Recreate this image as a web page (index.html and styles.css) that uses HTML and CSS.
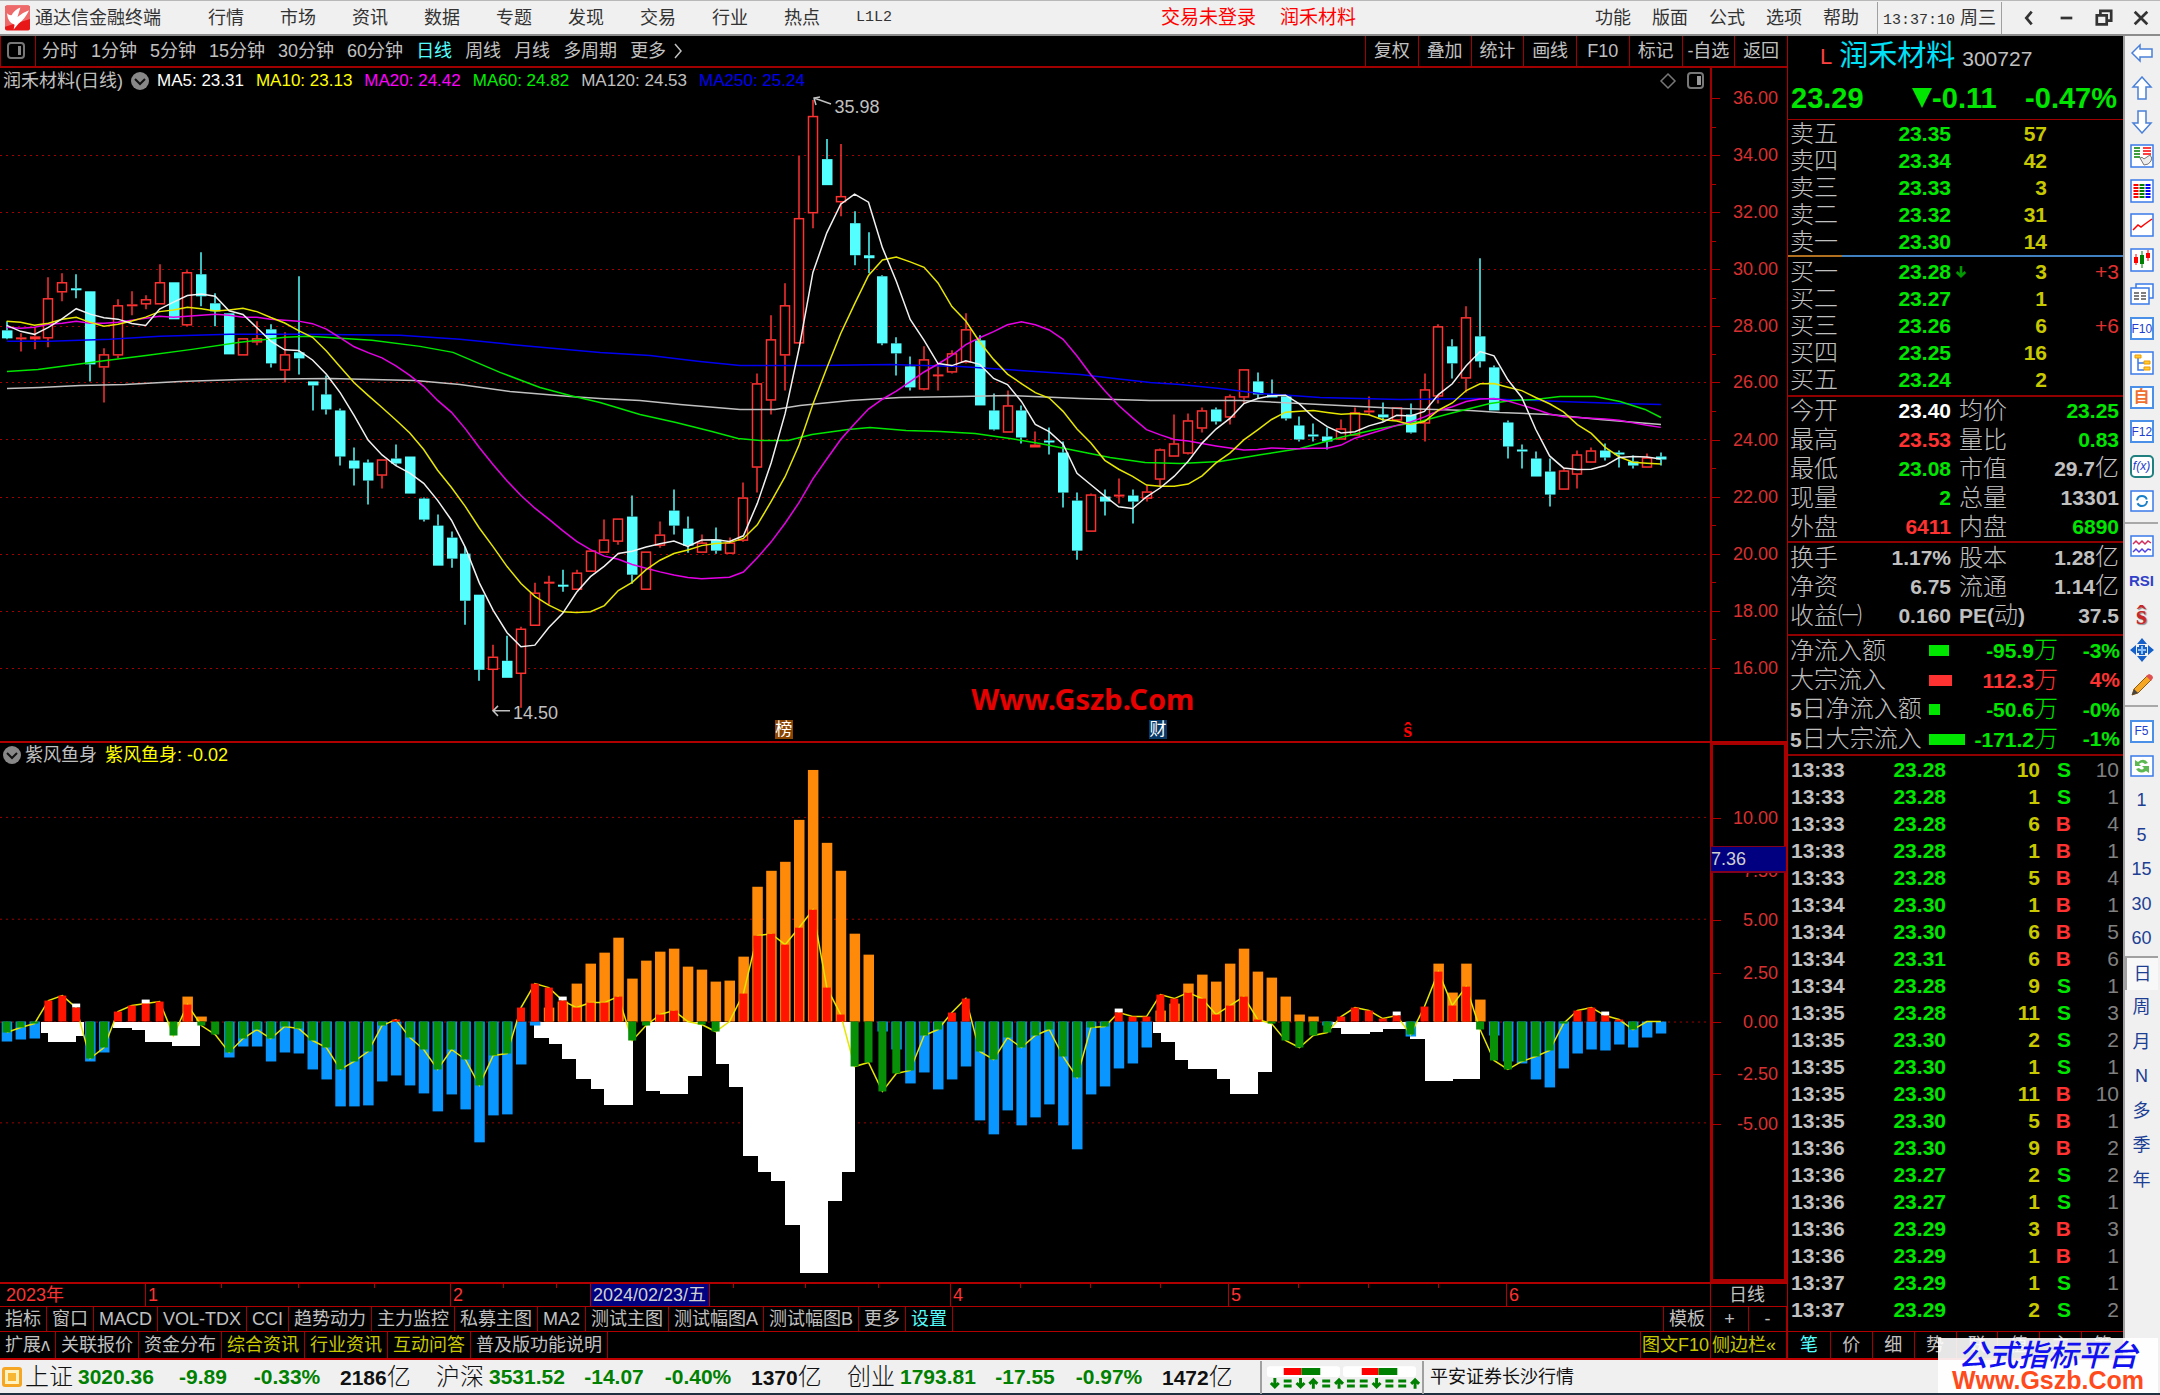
FILE: index.html
```html
<!DOCTYPE html>
<html lang="zh-CN">
<head>
    <meta charset="UTF-8">
    <meta name="viewport" content="width=device-width, initial-scale=1.0">
    <title>通达信金融终端</title>
    <link rel="stylesheet" href="styles.css">
</head>
<body>
    <header class="titlebar">
        <svg class="logo" viewBox="0 0 26 26"><rect width="26" height="26" rx="2" fill="#e81818"/><path d="M0 2Q0 0 2 0H24Q26 0 26 2V14L0 22Z" fill="#ee6a6a"/><path d="M2 8Q5 11 7 10Q10 4 16 2L13 12Q19 7 25 5Q21 14 14 19L9 25L10 20Q3 18 2 8Z" fill="#fff"/></svg>
        <span class="app-name">通达信金融终端</span>
        <nav class="menu">
            <a href="#">行情</a><a href="#">市场</a><a href="#">资讯</a><a href="#">数据</a><a href="#">专题</a><a href="#">发现</a><a href="#">交易</a><a href="#">行业</a><a href="#">热点</a><a href="#" class="mono">L1L2</a>
        </nav>
        <div class="login"><a href="#">交易未登录</a><a href="#">润禾材料</a></div>
        <nav class="menu-right"><a href="#">功能</a><a href="#">版面</a><a href="#">公式</a><a href="#">选项</a><a href="#">帮助</a></nav>
        <div class="clock"><span class="mono">13:37:10</span> 周三</div>
        <div class="win-buttons">
            <button aria-label="后退"><svg viewBox="0 0 20 20"><path d="M13 3L7 10L13 17" fill="none" stroke="#333" stroke-width="3"/></svg></button>
            <button aria-label="最小化"><svg viewBox="0 0 20 20"><path d="M4 10H17" stroke="#333" stroke-width="3"/></svg></button>
            <button aria-label="还原"><svg viewBox="0 0 20 20"><path d="M6 6V2H18V13H14M2 7H13V17H2Z" fill="none" stroke="#333" stroke-width="3"/></svg></button>
            <button aria-label="关闭"><svg viewBox="0 0 20 20"><path d="M3 3L17 17M17 3L3 17" stroke="#333" stroke-width="3"/></svg></button>
        </div>
    </header>

    <div class="workspace">
        <main class="main">
            <div class="toolbar">
                <button class="layout-btn" aria-label="布局"><svg viewBox="0 0 18 18"><rect x="1" y="1" width="16" height="15" rx="3" fill="none" stroke="#777" stroke-width="2"/><path d="M11 4V13H14V4Z" fill="#888"/></svg></button>
                <div class="periods">
                    <button>分时</button><button>1分钟</button><button>5分钟</button><button>15分钟</button><button>30分钟</button><button>60分钟</button><button class="active">日线</button><button>周线</button><button>月线</button><button>多周期</button><button>更多<svg class="more-arrow" viewBox="0 0 12 16"><path d="M3 1L9 8L3 15" fill="none" stroke="#c0c0c0" stroke-width="1.5"/></svg></button>
                </div>
                <div class="tools">
                    <button>复权</button><button>叠加</button><button>统计</button><button>画线</button><button>F10</button><button>标记</button><button>-自选</button><button>返回</button>
                </div>
            </div>

            <section class="pane pane-price">
                <div class="canvas">
                    <svg class="plot" id="pricePlot" viewBox="0 68 1710 672" preserveAspectRatio="none"></svg>
                    <div class="legend">
                        <span class="legend-title">润禾材料(日线)</span>
                        <svg class="fold" viewBox="0 0 18 18"><circle cx="9" cy="9" r="9" fill="#888"/><path d="M4 7L9 12L14 7" fill="none" stroke="#111" stroke-width="2"/></svg>
                        <span class="ma5">MA5: 23.31</span><span class="ma10">MA10: 23.13</span><span class="ma20">MA20: 24.42</span><span class="ma60">MA60: 24.82</span><span class="ma120">MA120: 24.53</span><span class="ma250">MA250: 25.24</span>
                        <svg class="corner" viewBox="0 0 46 18"><path d="M9 2L16 9L9 16L2 9Z" fill="none" stroke="#777" stroke-width="1.5"/><rect x="29" y="1" width="15" height="15" rx="3" fill="none" stroke="#777" stroke-width="2"/><path d="M38 4V13H42V4Z" fill="#999"/></svg>
                    </div>
                    <span class="mark mark-high">35.98</span>
                    <span class="mark mark-low">14.50</span>
                    <span class="site">Www.Gszb.Com</span>
                    <span class="event event-list">榜</span>
                    <span class="event event-fin">财</span>
                    <span class="event event-s">ŝ</span>
                </div>
                <div class="axis" id="priceAxis"></div>
            </section>

            <section class="pane pane-sub">
                <div class="canvas">
                    <svg class="plot" id="subPlot" viewBox="0 742 1710 540" preserveAspectRatio="none"></svg>
                    <div class="legend">
                        <svg class="fold" viewBox="0 0 18 18"><circle cx="9" cy="9" r="9" fill="#888"/><path d="M4 7L9 12L14 7" fill="none" stroke="#111" stroke-width="2"/></svg>
                        <span class="legend-title">紫风鱼身</span><span class="sub-value">紫风鱼身: -0.02</span>
                    </div>
                </div>
                <div class="axis axis-sub" id="subAxis"><span class="cursor-value">7.36</span></div>
            </section>

            <div class="dates">
                <div class="date-track" id="dateTrack"></div>
                <div class="date-period">日线</div>
            </div>

            <div class="tabs">
                <button>指标</button><button>窗口</button><button>MACD</button><button>VOL-TDX</button><button>CCI</button><button>趋势动力</button><button>主力监控</button><button>私募主图</button><button>MA2</button><button>测试主图</button><button>测试幅图A</button><button>测试幅图B</button><button>更多</button><button class="active">设置</button>
                <div class="tabs-right"><button>模板</button><button class="zoom-btn">+</button><button class="zoom-btn">-</button></div>
            </div>
            <div class="tabs tabs-info">
                <button>扩展ʌ</button><button>关联报价</button><button>资金分布</button><button class="hot">综合资讯</button><button class="hot">行业资讯</button><button class="hot">互动问答</button><button>普及版功能说明</button>
                <div class="tabs-right"><button class="hot">图文F10</button><button class="hot side-toggle">侧边栏«</button></div>
            </div>
        </main>

        <aside class="panel">
            <div class="stock">
                <div class="stock-name"><span class="flag">L</span><h1>润禾材料</h1><span class="code">300727</span></div>
                <div class="stock-price"><span>23.29</span><span class="change"><svg viewBox="0 0 20 20"><path d="M0 0H20L10 20Z" fill="#00e600"/></svg>-0.11</span><span>-0.47%</span></div>
            </div>
            <table class="book sell">
                <tr><th>卖五</th><td>23.35</td><td></td><td>57</td><td></td></tr>
                <tr><th>卖四</th><td>23.34</td><td></td><td>42</td><td></td></tr>
                <tr><th>卖三</th><td>23.33</td><td></td><td>3</td><td></td></tr>
                <tr><th>卖二</th><td>23.32</td><td></td><td>31</td><td></td></tr>
                <tr><th>卖一</th><td>23.30</td><td></td><td>14</td><td></td></tr>
            </table>
            <div class="ratio"></div>
            <table class="book buy">
                <tr><th>买一</th><td>23.28</td><td><svg viewBox="0 0 14 14"><path d="M7 0V12M2 7L7 12L12 7" fill="none" stroke="#009a00" stroke-width="3"/></svg></td><td>3</td><td>+3</td></tr>
                <tr><th>买二</th><td>23.27</td><td></td><td>1</td><td></td></tr>
                <tr><th>买三</th><td>23.26</td><td></td><td>6</td><td>+6</td></tr>
                <tr><th>买四</th><td>23.25</td><td></td><td>16</td><td></td></tr>
                <tr><th>买五</th><td>23.24</td><td></td><td>2</td><td></td></tr>
            </table>
            <table class="stats">
                <tr><th>今开</th><td class="white">23.40</td><th>均价</th><td class="down">23.25</td></tr>
                <tr><th>最高</th><td class="up">23.53</td><th>量比</th><td class="down">0.83</td></tr>
                <tr><th>最低</th><td class="down">23.08</td><th>市值</th><td>29.7<i>亿</i></td></tr>
                <tr><th>现量</th><td class="down">2</td><th>总量</th><td>13301</td></tr>
                <tr><th>外盘</th><td class="up">6411</td><th>内盘</th><td class="down">6890</td></tr>
            </table>
            <table class="stats stats-more">
                <tr><th>换手</th><td>1.17%</td><th>股本</th><td>1.28<i>亿</i></td></tr>
                <tr><th>净资</th><td>6.75</td><th>流通</th><td>1.14<i>亿</i></td></tr>
                <tr><th>收益㈠</th><td>0.160</td><th><b>PE(</b>动<b>)</b></th><td>37.5</td></tr>
            </table>
            <table class="flow">
                <tr class="down"><th>净流入额</th><td><div class="bar" style="width: 20px"></div></td><td>-95.9<i>万</i></td><td>-3%</td></tr>
                <tr class="up"><th>大宗流入</th><td><div class="bar" style="width: 23px"></div></td><td>112.3<i>万</i></td><td>4%</td></tr>
                <tr class="down"><th><b>5</b>日净流入额</th><td><div class="bar" style="width: 11px"></div></td><td>-50.6<i>万</i></td><td>-0%</td></tr>
                <tr class="down"><th><b>5</b>日大宗流入</th><td><div class="bar" style="width: 36px"></div></td><td>-171.2<i>万</i></td><td>-1%</td></tr>
            </table>
            <div class="ticks"><table><tbody id="ticks"></tbody></table></div>
            <div class="panel-tabs">
                <button class="active">笔</button><button>价</button><button>细</button><button>势</button><button>联</button><button>值</button><button>主</button><button>筹</button>
            </div>
        </aside>

        <aside class="sidebar">
            <div class="side-group side-nav">
                <button aria-label="返回"><svg viewBox="0 0 24 24"><path d="M2 12L10 4V8H22V16H10V20Z" fill="#fff" stroke="#4a80d8" stroke-width="1.5"/></svg></button>
                <button aria-label="上翻"><svg viewBox="0 0 24 24"><path d="M12 1L21 11H16V23H8V11H3Z" fill="#fff" stroke="#4a80d8" stroke-width="1.5"/></svg></button>
                <button aria-label="下翻"><svg viewBox="0 0 24 24"><path d="M12 23L21 13H16V1H8V13H3Z" fill="#fff" stroke="#4a80d8" stroke-width="1.5"/></svg></button>
                <button aria-label="自选报价"><svg viewBox="0 0 24 24"><rect x="1" y="1" width="22" height="22" fill="#fff" stroke="#3a7ae8" stroke-width="1.5"/><path d="M4 4H10M4 7H10M4 10H10M4 13H10" stroke="#008000" stroke-width="1.5"/><path d="M13 4H21M13 7H21M13 10H21" stroke="#f00" stroke-width="1.5"/><path d="M10 14Q12 12 14 15L20 11Q23 14 21 17Q19 21 14 21Z" fill="#eee" stroke="#777"/></svg></button>
                <button aria-label="行情列表"><svg viewBox="0 0 24 24"><rect x="1" y="1" width="22" height="22" fill="#fff" stroke="#3a7ae8" stroke-width="1.5"/><g stroke-width="5" stroke-dasharray="2 1"><path d="M6 5V20" stroke="#f00"/><path d="M12 5V20" stroke="#008000"/><path d="M18 5V20" stroke="#00f"/></g></svg></button>
                <button aria-label="分时图"><svg viewBox="0 0 24 24"><rect x="1" y="1" width="22" height="22" fill="#fff" stroke="#3a7ae8" stroke-width="1.5"/><path d="M3 17L8 12L11 14L15 11L22 6" fill="none" stroke="#f00" stroke-width="1.5"/></svg></button>
                <button aria-label="K线图"><svg viewBox="0 0 24 24"><rect x="1" y="1" width="22" height="22" fill="#fff" stroke="#3a7ae8" stroke-width="1.5"/><path d="M6 6V17M18 2V13" stroke="#f00"/><path d="M4 9H8V15H4ZM16 5H20V10H16Z" fill="#f00"/><path d="M12 3V20" stroke="#008000"/><path d="M10 7H14V16H10Z" fill="#008000"/></svg></button>
                <button aria-label="资料"><svg viewBox="0 0 24 24"><path d="M6 6V2H23V16H19" fill="#fff" stroke="#3a7ae8" stroke-width="1.5"/><rect x="1" y="6" width="18" height="16" fill="#fff" stroke="#3a7ae8" stroke-width="1.5"/><path d="M4 11H9M4 14H9M4 17H9M11 11H16M11 14H16M11 17H16" stroke="#555" stroke-width="1.5"/></svg></button>
                <button class="boxed">F10</button>
                <button aria-label="板块"><svg viewBox="0 0 24 24"><rect x="1" y="1" width="22" height="22" fill="#fff" stroke="#3a7ae8" stroke-width="1.5"/><path d="M8 7V19H14M8 12H14" fill="none" stroke="#3a7ae8" stroke-width="1.5"/><path d="M5 4H11V7H5ZM14 10H20V13H14ZM14 16H20V19H14Z" fill="#fc3" stroke="#e90"/></svg></button>
                <button class="boxed orange">自</button>
                <button class="boxed">F12</button>
                <button class="boxed round">f(x)</button>
                <button aria-label="刷新"><svg viewBox="0 0 24 24"><rect x="1" y="2" width="22" height="20" fill="#fff" stroke="#3a7ae8" stroke-width="1.5"/><circle cx="12" cy="12" r="5" fill="none" stroke="#1a80c8" stroke-width="2" stroke-dasharray="13 3"/></svg></button>
            </div>
            <div class="side-group side-draw">
                <button aria-label="多图"><svg viewBox="0 0 24 24"><rect x="1" y="2" width="22" height="20" fill="#fff" stroke="#3a7ae8" stroke-width="1.5"/><path d="M3 10L6 7L9 10L12 7L15 10L18 7L21 9" fill="none" stroke="#d03060" stroke-width="1.5"/><path d="M3 18L6 15L9 18L12 15L15 18L18 15L21 16" fill="none" stroke="#5040e0" stroke-width="1.5"/></svg></button>
                <button class="rsi">RSI</button>
                <button class="sign">ŝ</button>
                <button aria-label="移动"><svg viewBox="0 0 24 24"><path d="M12 0L17 6H7ZM12 24L7 18H17ZM0 12L6 7V17ZM24 12L18 17V7ZM9 7H15V9H17V15H15V17H9V15H7V9H9Z" fill="#1560c8"/><path d="M11 8H13V11H16V13H13V16H11V13H8V11H11Z" fill="#8cc0f8"/></svg></button>
                <button aria-label="画线"><svg viewBox="0 0 24 24"><path d="M2 22L4 16L17 3L21 7L8 20Z" fill="#f5a623" stroke="#8a5a10"/><path d="M16 3L19 1Q23 2 23 5L21 8Z" fill="#e05050"/><path d="M2 22L4 16L8 20Z" fill="#444"/></svg></button>
            </div>
            <div class="side-group side-period">
                <button class="boxed">F5</button>
                <button aria-label="切换"><svg viewBox="0 0 24 24"><rect x="1" y="2" width="22" height="20" fill="#fff" stroke="#3a7ae8" stroke-width="1.5"/><path d="M5 12V6L8 8Q14 3 18 9L15 10Q12 7 9 10L11 12ZM19 12V19L16 17Q10 21 6 15L9 14Q12 17 14 14L12 12Z" fill="#5cb850"/></svg></button>
                <button>1</button><button>5</button><button>15</button><button>30</button><button>60</button><button class="pressed">日</button><button>周</button><button>月</button><button>N</button><button>多</button><button>季</button><button>年</button>
            </div>
        </aside>
    </div>

    <footer class="status">
        <svg class="status-icon" viewBox="0 0 22 22"><rect x="1" y="1" width="20" height="20" rx="3" fill="#f5a623"/><rect x="4" y="4" width="14" height="14" fill="#fff3c4"/><rect x="7" y="7" width="8" height="8" fill="#f7b733"/></svg>
        <div class="index"><span>上证</span><b>3020.36</b><b>-9.89</b><b>-0.33%</b><span class="amount">2186<i>亿</i></span></div>
        <div class="index"><span>沪深</span><b>3531.52</b><b>-14.07</b><b>-0.40%</b><span class="amount">1370<i>亿</i></span></div>
        <div class="index"><span>创业</span><b>1793.81</b><b>-17.55</b><b>-0.97%</b><span class="amount">1472<i>亿</i></span></div>
        <svg class="breadth" viewBox="0 0 162 33">
            <rect x="5" y="5" width="74" height="11" rx="3" fill="#fff"/><rect x="82" y="5" width="74" height="11" rx="3" fill="#fff"/>
            <path d="M22 7H40V14H22ZM101 7H118V14H101Z" fill="#f00"/><path d="M40 7H59V14H40ZM118 7H137V14H118Z" fill="#008000"/>
            <g id="arrows" fill="none" stroke="#008000" stroke-width="3"></g>
        </svg>
        <span class="broker">平安证券长沙行情</span>
    </footer>

    <div class="watermark"><span class="wm-name">公式指标平台</span><span class="wm-url">Www.Gszb.Com</span></div>

    <script src="charts.js"></script>
</body>
</html>
```
FILE: styles.css
```css
* {
    box-sizing: border-box;
}

body {
    margin: 0;
    min-height: 100vh;
    display: flex;
    flex-direction: column;
    background: #f0f0f0;
    color: #c0c0c0;
    font-family: "Liberation Sans", "Noto Sans CJK SC", sans-serif;
    font-size: 18px;
    line-height: 24px;
}

button {
    margin: 0;
    padding: 0;
    border: 0;
    background: none;
    color: inherit;
    font: inherit;
    white-space: nowrap;
    cursor: pointer;
}

a {
    color: inherit;
    text-decoration: none;
}

svg {
    display: block;
}

i {
    font-style: normal;
    font-weight: 300;
}

table {
    border-collapse: collapse;
    table-layout: fixed;
    width: 100%;
}

th,
td {
    padding: 0;
    white-space: nowrap;
}

.mono {
    font-family: "Liberation Mono", monospace;
    font-size: 15px;
}

/* title bar */
.titlebar {
    display: flex;
    align-items: center;
    height: 36px;
    padding-left: 5px;
    border-top: 1px solid #b8b8b8;
    border-bottom: 2px solid #8c8c8c;
    color: #333;
    white-space: nowrap;
}

.logo {
    width: 25px;
    height: 26px;
    margin-right: 5px;
}

.menu {
    display: flex;
    gap: 36px;
    margin-left: 47px;
}

.login {
    display: flex;
    gap: 24px;
    margin-left: auto;
    color: #f00;
    font-size: 19px;
}

.menu-right {
    display: flex;
    gap: 21px;
    margin-left: 239px;
}

.clock {
    height: 32px;
    margin-left: 18px;
    padding: 0 5px;
    border: solid #a0a0a0;
    border-width: 0 1px;
    line-height: 32px;
}

.win-buttons {
    display: flex;
    justify-content: space-between;
    width: 158px;
    padding: 0 10px 0 18px;
}

.win-buttons svg {
    width: 18px;
    height: 18px;
}

/* workspace */
.workspace {
    flex: 1;
    display: flex;
}

.main {
    flex: 1;
    display: flex;
    flex-direction: column;
    min-width: 0;
    background: #000;
}

.toolbar {
    display: flex;
    height: 32px;
    border-bottom: 2px solid #a00000;
}

.layout-btn {
    width: 36px;
    padding-left: 6px;
    border: solid #a00000;
    border-width: 0 1px;
}

.layout-btn svg {
    width: 18px;
    height: 18px;
}

.periods {
    display: flex;
    gap: 13px;
    padding-left: 6px;
}

.periods button {
    display: flex;
    align-items: center;
}

.active {
    color: #54ffff;
}

.more-arrow {
    width: 12px;
    height: 16px;
    margin-left: 6px;
}

.tools {
    display: grid;
    grid-template-columns: repeat(8, 1fr);
    width: 422px;
    margin-left: auto;
}

.tools button {
    border-left: 1px solid #a00000;
}

.pane {
    display: flex;
}

.pane-price {
    flex: 674 1 0;
    border-bottom: 2px solid #b00000;
}

.pane-sub {
    flex: 540 1 0;
}

.canvas {
    flex: 1;
    position: relative;
    min-width: 0;
}

.plot {
    position: absolute;
    width: 100%;
    height: 100%;
}

.legend {
    position: relative;
    display: flex;
    align-items: center;
    gap: 12px;
    height: 26px;
    padding: 0 5px 0 3px;
    font-size: 17px;
    white-space: nowrap;
}

.legend-title {
    font-size: 18px;
}

.fold {
    width: 18px;
    height: 18px;
    margin: 0 -4px;
}

.pane-sub .legend {
    height: 24px;
    gap: 8px;
}

.pane-sub .fold {
    margin-left: 0;
}

.corner {
    width: 46px;
    height: 18px;
    margin-left: auto;
}

.ma5 { color: #fff; }
.ma10, .sub-value { color: #ffff00; }
.ma20 { color: #ff00ff; }
.ma60 { color: #00f000; }
.ma120 { color: #c0c0c0; }
.ma250 { color: #0000f0; }

.sub-value {
    font-size: 18px;
}

.mark {
    position: absolute;
    font-size: 18px;
}

.mark-high {
    left: 48.8%;
    top: 4%;
}

.mark-low {
    left: 30%;
    top: 94%;
}

.site {
    position: absolute;
    left: 56.8%;
    top: 91.5%;
    color: #e60000;
    font: bold 29px/30px "Noto Sans", sans-serif;
}

.event {
    position: absolute;
    bottom: 2px;
    width: 18px;
    height: 19px;
    color: #fff;
    font-size: 17px;
    line-height: 19px;
    text-align: center;
}

.event-list {
    left: 45.3%;
    background: #8b4500;
}

.event-fin {
    left: 67.2%;
    background: #083868;
}

.event-s {
    left: 81.8%;
    color: #f00;
    font-family: "Liberation Serif", serif;
    font-weight: bold;
    font-size: 22px;
}

.axis {
    position: relative;
    width: 77px;
    border-left: 2px solid #a00000;
    color: #d83030;
}

.axis-sub {
    border: 3px solid #a80000;
    border-top-width: 2px;
}

.axis-label {
    position: absolute;
    right: 9px;
    height: 24px;
    margin-top: -12px;
}

.axis-sub .axis-label {
    right: 6px;
}

.axis-tick {
    position: absolute;
    left: 0;
    width: 4px;
    height: 1px;
    background: #b00000;
}

.axis-tick.long {
    width: 8px;
}

.cursor-value {
    position: absolute;
    z-index: 1;
    left: -2px;
    right: -2px;
    top: 19%;
    height: 27px;
    border: solid #800020;
    border-width: 1px 0 2px;
    background: #000080;
    color: #d0d0d0;
}

.dates {
    display: flex;
    height: 24px;
    border-top: 2px solid #b00000;
    line-height: 23px;
}

.date-track {
    flex: 1;
    position: relative;
    color: #ff3232;
}

.date-mark {
    position: absolute;
    top: 0;
    height: 22px;
    padding-left: 2px;
    border-left: 1px solid #b00000;
}

.date-mark.first {
    border-left: 0;
}

.date-mark.minor {
    height: 4px;
}

.date-mark.cursor {
    padding-right: 3px;
    border-right: 1px solid #b00000;
    background: #000080;
    color: #d0d0d0;
}

.date-period {
    width: 77px;
    border-left: 1px solid #b00000;
    padding-right: 4px;
    text-align: center;
}

.tabs {
    display: flex;
    height: 25px;
    border-top: 1px solid #b00000;
    line-height: 24px;
}

.tabs-info {
    height: 29px;
    border-bottom: 2px solid #c00000;
    line-height: 26px;
}

.tabs button {
    padding: 0 5px;
    border-right: 1px solid #a00000;
}

.tabs-right {
    display: flex;
    margin-left: auto;
    border-left: 1px solid #a00000;
}

.tabs-right .zoom-btn {
    width: 38px;
}

.tabs .hot {
    color: #c8c800;
}

.tabs-info .tabs-right button {
    padding: 0 1px;
}

.tabs-right .side-toggle {
    width: 76px;
    text-align: left;
}

/* quote panel */
.panel {
    display: flex;
    flex-direction: column;
    width: 336px;
    border-left: 1px solid #b00000;
    background: #000;
    font-size: 24px;
    line-height: 27px;
}

.panel th {
    font-weight: 300;
    text-align: left;
    padding-left: 2px;
}

.panel td,
.panel th b {
    font-size: 21px;
    font-weight: bold;
    text-align: right;
}

.panel td i {
    font-size: 24px;
}

.panel .up { color: #ff3232; }
.panel .down { color: #00e600; }
.panel .white { color: #fff; }

.stock {
    height: 84px;
    border-bottom: 1px solid #a00000;
}

.stock-name {
    display: flex;
    align-items: center;
    height: 40px;
    padding-left: 32px;
}

.stock-name h1 {
    margin: 0 7px;
    color: #00e0f8;
    font-size: 29px;
    font-weight: 400;
}

.flag {
    color: #ff4040;
    font-size: 22px;
}

.code {
    padding-top: 4px;
    font-size: 21px;
}

.stock-price {
    display: flex;
    justify-content: space-between;
    align-items: center;
    height: 44px;
    padding: 0 6px 0 3px;
    color: #00e600;
    font-size: 29px;
    font-weight: bold;
}

.change {
    display: flex;
    align-items: center;
    padding-left: 20px;
}

.change svg {
    width: 20px;
    height: 20px;
}

.book {
    height: 135px;
}

.book tr {
    height: 27px;
}

.book th { width: 60px; }
.book td:nth-child(2) { width: 103px; color: #00e600; }
.book td:nth-child(3) { width: 18px; }
.book td:nth-child(4) { width: 78px; color: #c8c800; }
.book td:nth-child(5) {
    padding-right: 4px;
    color: #e03030;
    font-weight: normal;
}

.book td svg {
    width: 12px;
    height: 14px;
    margin-left: 4px;
}

.ratio {
    height: 2px;
    background: linear-gradient(to right, #b07020 16%, #4080c0 16%);
}

.buy {
    margin: 1px 0 2px;
}

.stats {
    height: 146px;
    border-top: 2px solid #900000;
}

.stats tr,
.flow tr {
    height: 28px;
    line-height: 28px;
}

.stats th { width: 74px; }
.stats td { width: 89px; }
.stats th:nth-child(3) { width: 82px; padding-left: 8px; }
.stats td:nth-child(4) { width: auto; padding-right: 4px; }

.stats-more {
    height: 93px;
    border-bottom: 4px solid #000;
}

.flow {
    height: 120px;
    border-top: 2px solid #900000;
}

.flow th { width: 141px; color: #c0c0c0; }
.flow td { width: 38px; }
.flow td:nth-child(3) { width: 91px; }
.flow td:nth-child(4) { width: auto; padding-right: 3px; }

.bar {
    height: 11px;
    background: currentColor;
}

.ticks {
    flex: 1;
    border-top: 2px solid #900000;
}

.ticks tr {
    height: 27px;
}

.ticks td:nth-child(1) { width: 58px; padding-left: 3px; text-align: left; }
.ticks td:nth-child(2) { width: 100px; color: #00e600; }
.ticks td:nth-child(3) { width: 94px; color: #c8c800; }
.ticks td:nth-child(4) { width: 31px; }
.ticks td:nth-child(5) { padding-right: 4px; color: #808080; font-weight: normal; }

.panel-tabs {
    display: grid;
    grid-template-columns: repeat(8, 1fr);
    height: 29px;
    border-top: 1px solid #b00000;
    border-bottom: 2px solid #c00000;
    font-size: 18px;
}

.panel-tabs button + button {
    border-left: 1px solid #a00000;
}

/* icon sidebar */
.sidebar {
    width: 37px;
    border-left: 2px solid #a0a0a0;
    color: #1c3f94;
}

.side-group {
    display: grid;
    grid-auto-rows: 1fr;
    justify-items: center;
    align-items: center;
    margin-right: 2px;
    border-bottom: 2px solid #a8a8a8;
}

.side-nav {
    height: 488px;
    padding-bottom: 4px;
    margin-bottom: 5px;
}

.side-draw {
    height: 178px;
    padding-bottom: 3px;
    margin-bottom: 7px;
}

.side-period {
    height: 483px;
    border-bottom: 0;
}

.side-group svg {
    width: 24px;
    height: 24px;
}

.side-group .boxed {
    width: 24px;
    height: 23px;
    border: 2px solid #4a90e8;
    background: #fff;
    color: #2040d0;
    font-size: 12px;
    line-height: 18px;
}

.side-group .orange {
    color: #f07030;
    font-size: 16px;
    font-weight: bold;
}

.side-group .round {
    border-color: #208080;
    border-radius: 5px;
    font-style: italic;
}

.side-group .rsi {
    color: #3040c8;
    font-size: 15px;
    font-weight: bold;
}

.side-group .sign {
    color: #c82828;
    font: bold 28px/30px "Liberation Serif", serif;
    text-shadow: 1px 1px 1px #888;
}

.side-group .pressed {
    width: 100%;
    height: 34px;
    border: solid #a0a0a0;
    border-width: 2px 0 0 2px;
    background: #f8f8f8;
}

/* index strip */
.status {
    display: flex;
    align-items: center;
    height: 35px;
    padding: 1px 0 0 1px;
    border-bottom: 2px solid #203040;
    color: #111;
    white-space: nowrap;
}

.status-icon {
    width: 22px;
    height: 22px;
    margin-right: 2px;
}

.index {
    display: grid;
    grid-template-columns: 53px 85px 80px 88px 105px;
    align-items: center;
    font-size: 24px;
    font-weight: 300;
}

.index b {
    color: #008000;
    font-size: 21px;
    font-weight: bold;
    text-align: center;
}

.index b:nth-child(2) {
    text-align: left;
}

.index .amount {
    padding-left: 9px;
    font-size: 21px;
    font-weight: bold;
}

.amount i {
    font-size: 24px;
}

.breadth {
    width: 164px;
    height: 33px;
    margin-left: 2px;
    border: solid #a0a0a0;
    border-width: 0 2px;
}

.broker {
    margin-left: 6px;
}

.watermark {
    position: absolute;
    right: 2px;
    bottom: 2px;
    display: flex;
    flex-direction: column;
    align-items: center;
    width: 220px;
    height: 55px;
    background: rgba(255, 255, 255, 0.9);
    white-space: nowrap;
}

.wm-name {
    color: #1010f0;
    font: italic 500 30px/30px "Noto Sans CJK SC", sans-serif;
}

.wm-url {
    color: #ff4a1c;
    font: bold 25px/25px "Liberation Sans", sans-serif;
}
```
FILE: charts.js
```js
const NS = 'http://www.w3.org/2000/svg';
const STEP = 13.9;
const X0 = 6.7;
const xAt = i => X0 + i * STEP;

function add(parent, tag, attrs) {
    const el = document.createElementNS(NS, tag);
    for (const key in attrs) el.setAttribute(key, attrs[key]);
    parent.appendChild(el);
    return el;
}

// [direction, high, body top, body bottom, low]
const candles = [
    ['c',321,330,338,339],['r',333,337,339,351],['r',327,336,339,349],['r',277,298,338,347],['r',273,282,292,301],
    ['c',274,288,289,298],['c',291,291,364,381],['r',348,354,367,402],['r',299,305,355,358],['r',291,304,306,315],
    ['r',295,299,304,309],['r',264,282,304,304],['c',282,282,319,319],['r',270,272,325,326],['c',252,274,296,306],
    ['c',293,303,311,326],['c',313,313,354,354],['r',338,338,355,355],['r',321,338,342,345],['c',324,329,363,367],
    ['r',332,354,370,382],['c',276,352,358,374],['c',381,381,385,410],['c',375,394,409,414],['c',408,410,456,465],
    ['c',447,460,468,485],['c',459,462,480,504],['r',459,459,475,488],['c',444,458,463,465],['c',456,456,493,493],
    ['c',497,498,519,521],['c',514,525,565,565],['c',531,537,558,567],['c',546,553,600,624],['c',594,594,669,680],
    ['r',644,656,669,710],['c',635,660,677,677],['r',626,628,673,707],['r',582,592,625,625],['r',575,581,583,604],
    ['c',569,584,585,591],['r',569,572,589,589],['r',550,550,571,571],['r',519,539,552,552],['r',518,518,541,544],
    ['c',495,516,574,583],['r',551,551,589,589],['r',521,534,545,547],['c',489,510,525,534],['c',516,528,545,552],
    ['r',534,542,552,552],['c',527,539,550,553],['r',537,542,553,553],['r',482,497,540,541],['r',373,383,467,492],
    ['r',315,339,400,414],['r',283,305,355,390],['r',156,218,343,343],['r',100,116,213,228],['c',139,159,185,185],
    ['r',144,196,202,216],['c',211,223,255,265],['c',232,255,258,273],['c',275,276,343,345],['c',337,343,353,375],
    ['c',356,366,387,390],['r',346,359,389,390],['r',363,374,375,390],['r',350,353,372,373],['r',313,329,362,363],
    ['c',335,340,405,405],['c',393,410,429,430],['r',390,405,432,432],['c',405,410,437,443],['r',431,444,447,447],
    ['c',427,440,441,454],['c',441,452,492,507],['c',492,500,550,559],['r',493,494,531,531],['c',489,496,501,515],
    ['r',478,494,495,503],['c',489,495,501,523],['r',485,491,498,501],['r',448,449,479,486],['r',414,443,456,456],
    ['r',413,420,453,454],['r',407,410,428,432],['c',407,409,421,424],['r',394,396,417,424],['r',369,369,397,403],
    ['c',372,381,394,398],['c',379,394,397,397],['c',396,396,418,420],['c',416,425,439,441],['c',423,434,436,441],
    ['c',427,436,441,449],['r',419,428,439,439],['r',407,412,435,435],['r',396,410,412,414],['c',402,414,417,421],
    ['r',407,407,420,420],['c',403,414,432,433],['r',373,389,423,441],['r',324,326,396,403],['c',339,346,363,378],
    ['r',306,317,378,392],['c',258,336,361,367],['c',365,367,410,410],['c',420,422,446,458],['c',444,449,451,468],
    ['c',451,458,476,476],['c',458,471,494,506],['r',467,470,489,489],['r',450,454,474,488],['r',447,450,462,462],
    ['c',443,450,457,460],['c',450,452,454,467],['c',455,461,465,468],['r',453,457,467,467],['c',452,456,459,465]
];

// averages before the first full window
const seed = {
    5: [325,331,334,327],
    10: [321,322,325,323,319,317,322,326,324],
    20: [327,328,327,324,323,321,323,323,322,320,318,316,317,316,315,314,315,317,317]
};

const longLines = {
    '#0000f0': '7,341 50,341 110,339 160,336 230,334 300,334 400,335 460,339 530,346 600,352 650,355 700,361 740,365 820,365 890,364 960,366 1020,370 1080,374 1150,382 1180,384 1220,388 1260,393 1320,397 1400,399 1480,398 1560,401 1620,403 1661,404',
    '#c0c0c0': '7,388 40,387 80,385 125,384 180,381 240,379 330,378 415,380 460,384 510,391 570,396 600,398 640,400 680,404 740,409 775,409 800,405 850,400 900,397 960,396 1010,395 1080,398 1150,400 1240,400 1320,404 1400,408 1470,410 1500,412 1550,414 1600,419 1661,424',
    '#00e600': '7,371 38,369 98,361 146,355 192,349 240,342 285,337 308,336 325,337 372,340 420,346 453,352 500,372 540,387 570,395 600,402 640,414 676,422 712,431 738,438 760,440 788,440 812,434 848,429 870,427 906,430 940,431 975,433 1010,438 1040,443 1075,450 1110,457 1145,462 1180,463 1220,461 1262,454 1300,448 1340,437 1380,428 1420,421 1450,413 1490,403 1512,400 1535,399 1560,396 1595,396 1620,401 1645,409 1661,417'
};

// [upper or lower bar end, value bar end], zero line at 1021
const ZERO = 1021;
const bars = [
    [1041,1032],[1039,1027],[1038,1023],[0,1000],[0,995],[0,1007],[1061,1058],[1052,1047],[0,1011],[0,1005],
    [0,1003],[0,1001],[0,1035],[996,1004],[1016,1025],[0,1034],[1057,1052],[1046,1038],[1046,1029],[1061,1038],
    [1052,1026],[1053,1028],[1069,1040],[1079,1047],[1106,1069],[1106,1061],[1105,1051],[1081,1025],[1075,1019],[1085,1037],
    [1093,1049],[1111,1069],[1094,1049],[1109,1059],[1142,1085],[1115,1055],[1114,1053],[1064,1007],[1025,983],[1007,987],
    [1001,1000],[983,1007],[963,1002],[952,1002],[937,996],[978,1040],[960,1025],[951,1014],[948,1010],[966,1021],
    [969,1024],[981,1031],[980,1021],[956,993],[886,935],[870,933],[861,944],[819,927],[769,909],[842,987],
    [870,1014],[933,1066],[954,1062],[1031,1091],[1049,1073],[1083,1070],[1072,1035],[1089,1029],[1079,1012],[1066,998],
    [1120,1051],[1134,1059],[1110,1037],[1125,1047],[1117,1035],[1104,1029],[1125,1056],[1149,1077],[1094,1027],[1086,1026],
    [1068,1012],[1063,1016],[1047,1016],[1010,994],[1003,998],[983,992],[974,998],[981,1014],[963,1005],[948,996],
    [971,1019],[977,1023],[996,1040],[1014,1047],[1016,1035],[1025,1032],[0,1016],[0,1007],[0,1010],[0,1018],
    [0,1015],[1036,1034],[0,1006],[963,971],[992,1005],[963,986],[999,1029],[1035,1060],[1061,1069],[1063,1061],
    [1079,1056],[1087,1050],[1068,1023],[1053,1010],[1049,1007],[1050,1015],[1044,1019],[1047,1029],[1037,1021],[1033,1021]
];

// white steps: [left, right, bottom]
const steps = [
    [41,48,1032],[48,76,1041],[76,84,1035],[113,132,1027],[132,145,1029],[145,172,1041],[172,200,1046],
    [534,549,1037],[549,562,1043],[562,576,1059],[576,591,1079],[591,604,1089],[604,633,1105],
    [646,660,1091],[660,688,1094],[688,702,1076],
    [716,729,1064],[729,743,1087],[743,758,1156],[758,771,1172],[771,785,1181],[785,800,1225],[800,828,1273],[828,842,1201],[842,855,1172],
    [1153,1161,1032],[1161,1175,1041],[1175,1188,1060],[1188,1217,1069],[1217,1230,1079],[1230,1258,1094],[1258,1272,1072],
    [1332,1341,1027],[1341,1370,1033],[1370,1383,1031],[1383,1406,1028],[1410,1425,1038],[1425,1453,1081],[1453,1480,1079]
];
const caps = [5, 10, 40, 80, 100, 115];

function line(svg, points, color) {
    add(svg, 'polyline', { points, fill: 'none', stroke: color, 'stroke-width': 1.5 });
}

function grid(svg, levels) {
    levels.forEach(y => add(svg, 'path', {
        d: `M0 ${y}H1710`, stroke: '#a00000', 'stroke-width': 1, 'stroke-dasharray': '2 4', 'shape-rendering': 'crispEdges'
    }));
}

function average(n) {
    const close = candles.map(c => c[0] === 'r' ? c[2] : c[3]);
    return candles.map((c, i) => {
        const y = i < n - 1 ? seed[n][i] : close.slice(i - n + 1, i + 1).reduce((a, b) => a + b) / n;
        return `${xAt(i).toFixed(1)},${y.toFixed(1)}`;
    }).join(' ');
}

function drawPrice() {
    const svg = document.getElementById('pricePlot');
    grid(svg, [155.5, 212.5, 269.5, 326.5, 382.5, 439.5, 496.5, 553.5, 610.5, 667.5]);
    candles.forEach(([dir, high, top, bottom, low], i) => {
        const x = Math.round(xAt(i));
        const color = dir === 'r' ? '#ff3232' : '#54ffff';
        const h = Math.max(bottom - top, 2);
        add(svg, 'path', { d: `M${x} ${high}V${top}M${x} ${bottom}V${low}`, stroke: color, 'stroke-width': 1.5 });
        if (dir === 'r' && h > 3) {
            add(svg, 'rect', { x: x - 4.5, y: top + 0.5, width: 9, height: h - 1, fill: '#000', stroke: color, 'stroke-width': 1.5 });
        } else {
            add(svg, 'rect', { x: x - 5, y: top, width: 10.5, height: h, fill: color });
        }
    });
    for (const color in longLines) line(svg, longLines[color], color);
    line(svg, average(20), '#e600e6');
    line(svg, average(10), '#e6e600');
    line(svg, average(5), '#f0f0f0');
    // pointers to the highest and lowest price
    add(svg, 'path', { d: 'M831 104L814 98M820 97L814 98L816 105M510 710H493M498 705L493 710L498 715', fill: 'none', stroke: '#c0c0c0', 'stroke-width': 1.5 });
}

function drawSub() {
    const svg = document.getElementById('subPlot');
    grid(svg, [816.5, 918.5, 1021.5, 1122.5]);
    steps.forEach(([left, right, bottom]) => add(svg, 'rect', {
        x: left, y: ZERO, width: right - left, height: bottom - ZERO, fill: '#fff', 'shape-rendering': 'crispEdges'
    }));
    bars.forEach(([end], i) => {
        if (!end) return;
        add(svg, 'rect', {
            x: xAt(i) - 5, y: Math.min(end, ZERO), width: 10.5, height: Math.abs(end - ZERO), fill: end < ZERO ? '#ff8a0a' : '#0a96ff'
        });
    });
    line(svg, bars.map((b, i) => `${xAt(i).toFixed(1)},${b[1]}`).join(' '), '#e6e600');
    caps.forEach(i => add(svg, 'rect', { x: xAt(i) - 4, y: bars[i][1] - 4, width: 8, height: 4, fill: '#fff' }));
    bars.forEach(([, end], i) => add(svg, 'rect', {
        x: xAt(i) - 4, y: Math.min(end, ZERO), width: 8, height: Math.abs(end - ZERO), fill: end < ZERO ? '#ff1400' : '#089008'
    }));
}

function drawAxis(id, labels, top, height, half) {
    const axis = document.getElementById(id);
    labels.forEach(([text, y], i) => {
        const pos = v => ((v - top) / height * 100).toFixed(2) + '%';
        axis.insertAdjacentHTML('beforeend',
            `<i class="axis-tick long" style="top:${pos(y)}"></i><span class="axis-label" style="top:${pos(y)}">${text}</span>`);
        if (half && labels[i + 1]) {
            axis.insertAdjacentHTML('beforeend', `<i class="axis-tick" style="top:${pos((y + labels[i + 1][1]) / 2)}"></i>`);
        }
    });
}

function drawDates() {
    const track = document.getElementById('dateTrack');
    const marks = [
        [4,'2023年','first'],[145,'1'],[221],[298],[374],[450,'2'],[503],[556],[590,'2024/02/23/五','cursor'],[733],[805],[878],
        [950,'4'],[1020],[1090],[1160],[1228,'5'],[1298],[1368],[1438],[1506,'6']
    ];
    track.innerHTML = marks.map(([x, text, cls]) =>
        `<span class="date-mark ${cls || (text ? '' : 'minor')}" style="left:${(x / 1710 * 100).toFixed(2)}%">${text || ''}</span>`).join('');
}

function drawTicks() {
    const ticks = [
        ['13:33','23.28',10,'S',10],['13:33','23.28',1,'S',1],['13:33','23.28',6,'B',4],['13:33','23.28',1,'B',1],['13:33','23.28',5,'B',4],
        ['13:34','23.30',1,'B',1],['13:34','23.30',6,'B',5],['13:34','23.31',6,'B',6],['13:34','23.28',9,'S',1],
        ['13:35','23.28',11,'S',3],['13:35','23.30',2,'S',2],['13:35','23.30',1,'S',1],['13:35','23.30',11,'B',10],['13:35','23.30',5,'B',1],
        ['13:36','23.30',9,'B',2],['13:36','23.27',2,'S',2],['13:36','23.27',1,'S',1],['13:36','23.29',3,'B',3],['13:36','23.29',1,'B',1],
        ['13:37','23.29',1,'S',1],['13:37','23.29',2,'S',2]
    ];
    document.getElementById('ticks').innerHTML = ticks.map(([time, price, vol, side, count]) =>
        `<tr><td>${time}</td><td>${price}</td><td>${vol}</td><td class="${side === 'B' ? 'up' : 'down'}">${side}</td><td>${count}</td></tr>`).join('');
}

function drawArrows() {
    const g = document.getElementById('arrows');
    const shape = {
        d: x => `M${x} 17V27M${x - 4} 22L${x} 26L${x + 4} 22`,
        u: x => `M${x} 28V18M${x - 4} 23L${x} 19L${x + 4} 23`,
        e: x => `M${x - 4} 20H${x + 4}M${x - 4} 25H${x + 4}`
    };
    'dedueu'.split('').forEach((k, i) => add(g, 'path', { d: shape[k](13 + i * 13) }));
    'eedeeu'.split('').forEach((k, i) => add(g, 'path', { d: shape[k](90 + i * 13) }));
}

drawPrice();
drawSub();
drawAxis('priceAxis', [['36.00',98],['34.00',155],['32.00',212],['30.00',269],['28.00',326],['26.00',382],['24.00',439],['22.00',496],['20.00',553],['18.00',610],['16.00',667]], 68, 672, true);
drawAxis('subAxis', [['10.00',817],['7.50',870],['5.00',919],['2.50',972],['0.00',1022],['-2.50',1074],['-5.00',1124]], 744, 535, false);
drawDates();
drawTicks();
drawArrows();
```
